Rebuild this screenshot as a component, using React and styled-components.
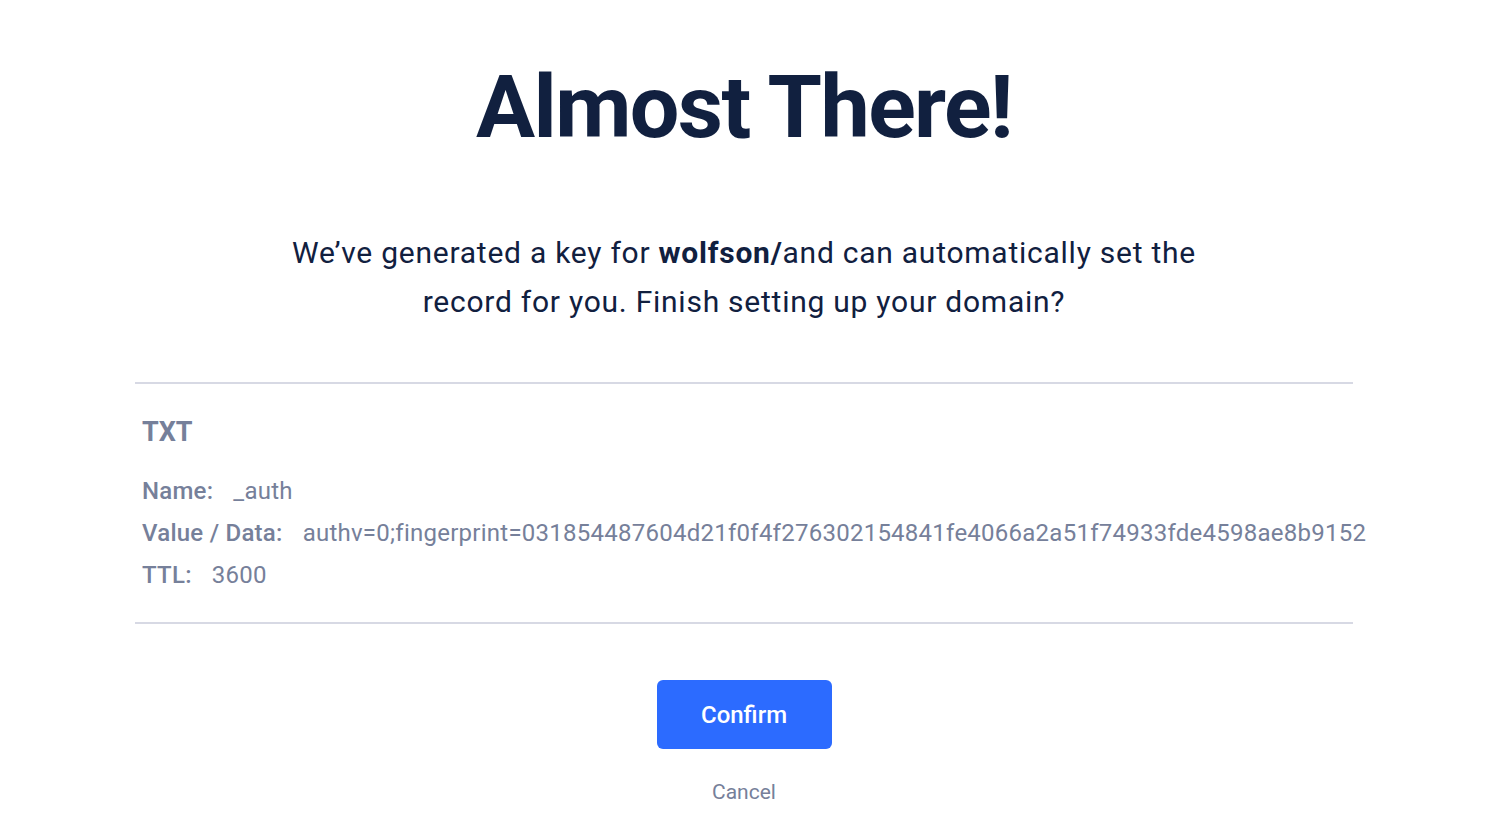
import React from "react";
import styled, { createGlobalStyle } from "styled-components";

const Global = createGlobalStyle`
  html, body { margin: 0; padding: 0; background: #ffffff; }
  body { font-family: Roboto, "Liberation Sans", Arial, sans-serif; }
  * { box-sizing: border-box; }
`;

const Page = styled.main`
  width: calc(100% - 9px);
  display: flex;
  flex-direction: column;
  align-items: center;
  padding-top: 63px;
`;

const Title = styled.h1`
  margin: 0;
  font-size: 88px;
  line-height: 88px;
  font-weight: 700;
  color: #11203f;
  letter-spacing: -1.6px;
`;

const Lead = styled.p`
  margin: 77px 0 0;
  max-width: 940px;
  text-align: center;
  font-size: 30px;
  line-height: 49px;
  font-weight: 400;
  letter-spacing: 0.75px;
  color: #11203f;
  strong { font-weight: 700; }
`;

const Record = styled.section`
  margin-top: 56px;
  width: 1218px;
  border-top: 2px solid #d7d9e4;
  border-bottom: 2px solid #d7d9e4;
  padding: 32px 7px 26px;
  color: #76809a;
`;

const RecordType = styled.h2`
  margin: 0 0 22px;
  font-size: 27px;
  line-height: 32px;
  font-weight: 700;
`;

const Row = styled.div`
  display: flex;
  gap: 20px;
  font-size: 24px;
  line-height: 42px;
  letter-spacing: 0.25px;
  white-space: nowrap;
`;

const Label = styled.span`
  font-weight: 500;
`;

const Value = styled.span`
  font-weight: 400;
`;

const ConfirmButton = styled.button`
  margin-top: 56px;
  width: 175px;
  height: 69px;
  border: none;
  border-radius: 6px;
  background: #2c6bff;
  color: #ffffff;
  font-family: inherit;
  font-size: 24px;
  font-weight: 500;
  cursor: pointer;
`;

const CancelLink = styled.button`
  margin-top: 31px;
  border: none;
  background: none;
  padding: 0;
  font-family: inherit;
  font-size: 21px;
  line-height: 24px;
  color: #76809a;
  cursor: pointer;
`;

const rows = [
  ["Name:", "_auth"],
  ["Value / Data:", "authv=0;fingerprint=031854487604d21f0f4f276302154841fe4066a2a51f74933fde4598ae8b9152"],
  ["TTL:", "3600"],
];

export default function App() {
  return (
    <>
      <Global />
      <Page>
        <Title>Almost There!</Title>
        <Lead>
          We’ve generated a key for <strong>wolfson/</strong>and can automatically set the record for you. Finish setting up your domain?
        </Lead>
        <Record>
          <RecordType>TXT</RecordType>
          {rows.map(([l, v]) => (
            <Row key={l}>
              <Label>{l}</Label>
              <Value>{v}</Value>
            </Row>
          ))}
        </Record>
        <ConfirmButton>Confirm</ConfirmButton>
        <CancelLink>Cancel</CancelLink>
      </Page>
    </>
  );
}
